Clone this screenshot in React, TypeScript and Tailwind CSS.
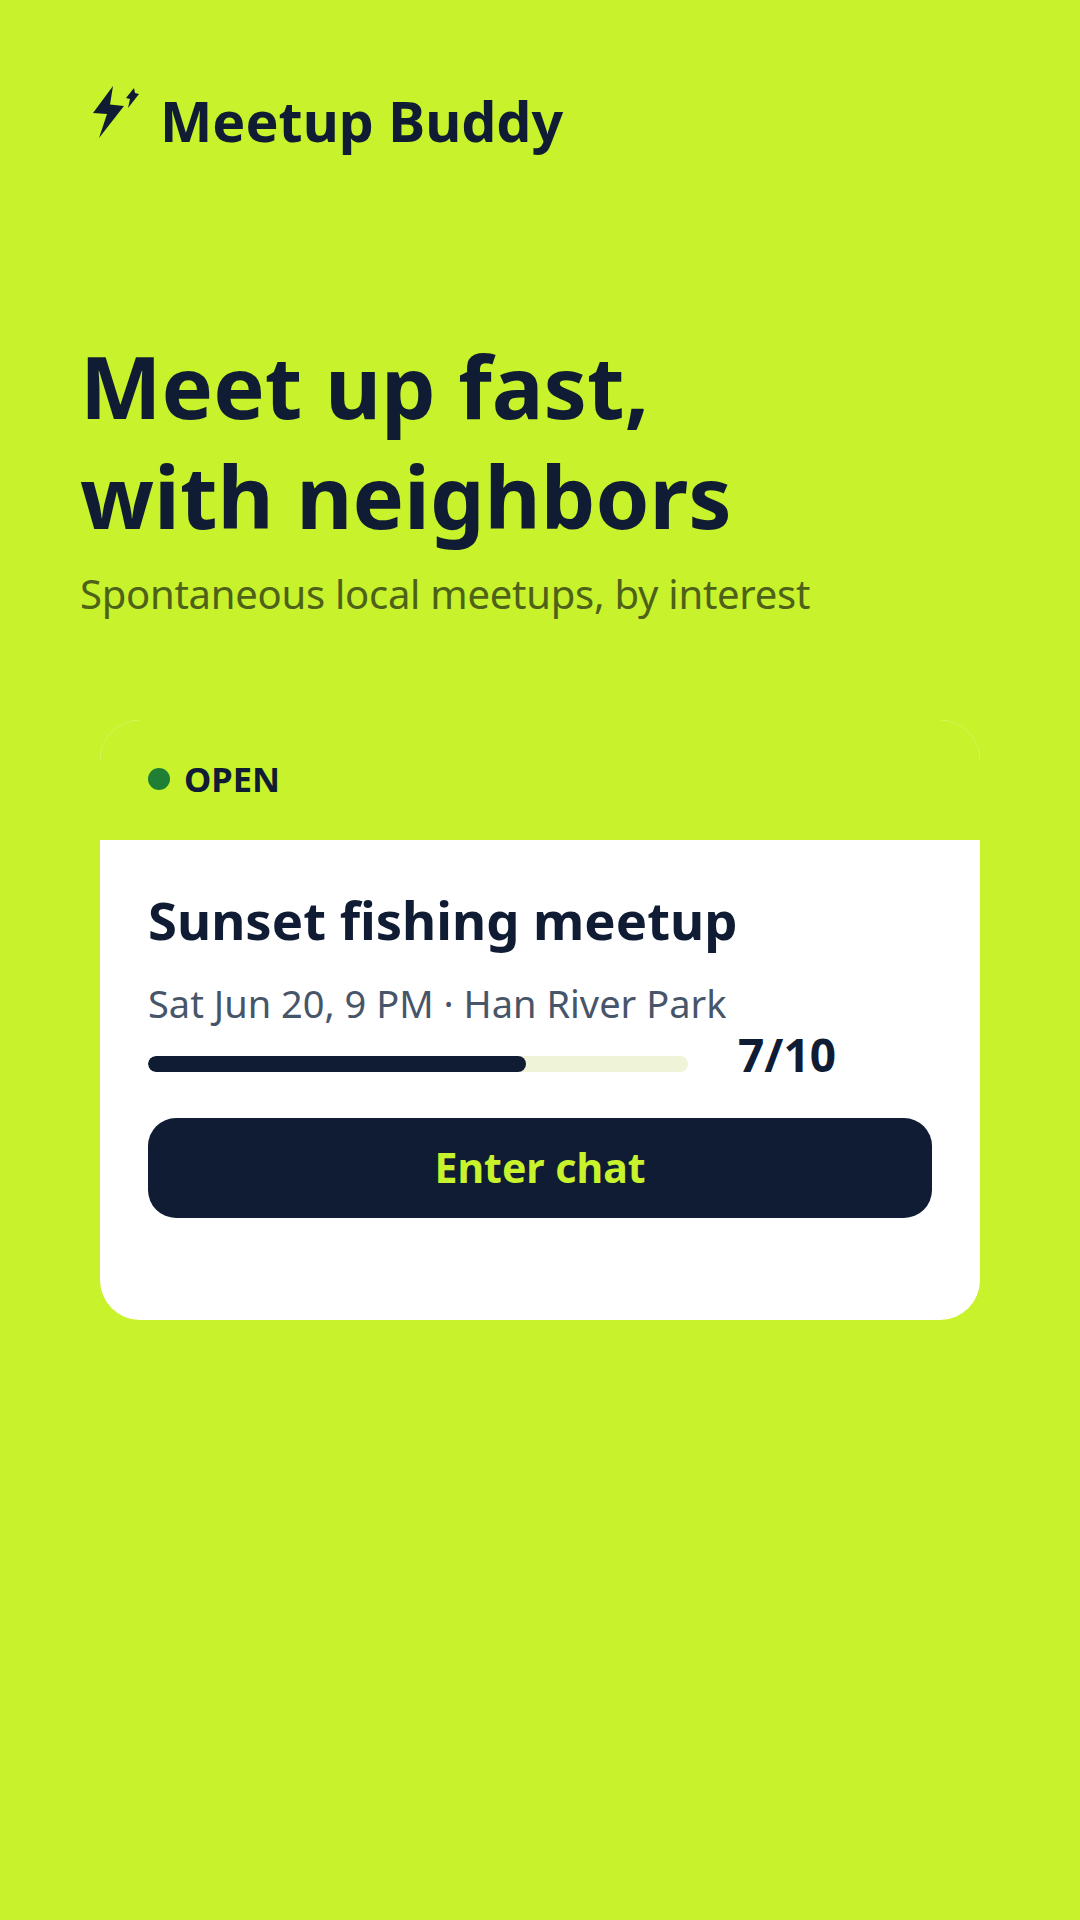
export default function App() {
  return (
    <div className="w-[1080px] h-[1920px] bg-[#c7f22c] font-['Noto_Sans',sans-serif] text-[#0f1c33] flex flex-col overflow-hidden">
      <header className="pt-[80px] pl-[80px] h-[331px] flex items-start">
        <div className="flex items-center gap-[18px] h-[82px]">
          <svg className="w-[62px] h-[70px] shrink-0 -mt-[10px]" viewBox="80 80 62 70" aria-hidden="true">
            <path d="M113 85 L93 112 L107 113 L99 137 L124 105 L110 103.5 Z" fill="#0f1c33" />
            <path d="M134 87 L126 97 L130 98 L128 107 L139 93 L135 92 Z" fill="#0f1c33" />
          </svg>
          <span className="text-[55.5px] font-bold leading-none">Meetup Buddy</span>
        </div>
      </header>
      <section className="pl-[80px]">
        <h1 className="text-[86.5px] font-bold leading-[110px]">Meet up fast,<br />with neighbors</h1>
        <p className="text-[40px] leading-[52px] text-[#4d6119] mt-[17px] tracking-[-0.26px]">Spontaneous local meetups, by interest</p>
      </section>
      <section className="mt-[100px] mx-[100px] w-[880px] h-[600px] bg-white rounded-[40px] overflow-hidden flex flex-col">
        <div className="h-[120px] bg-[#c7f22c] px-[48px] pb-[2px] flex items-center gap-[14px] shrink-0">
          <span className="w-[22px] h-[22px] rounded-full bg-[#1f8035]" />
          <span className="text-[34.5px] font-bold leading-none">OPEN</span>
        </div>
        <div className="px-[48px] pt-[44px] flex flex-col">
          <h2 className="text-[52.6px] font-bold leading-[72px]">Sunset fishing meetup</h2>
          <p className="text-[38px] leading-[50px] text-[#475569] mt-[22px]">Sat Jun 20, 9 PM · Han River Park</p>
          <div className="flex items-center h-[56px] mt-[8px]">
            <div className="w-[540px] h-[16px] rounded-full bg-[#eff4d9] overflow-hidden">
              <div className="w-[70%] h-full rounded-full bg-[#0f1c33]" />
            </div>
            <span className="ml-[50px] mb-[20px] text-[46px] font-bold leading-[56px]">7/10</span>
          </div>
          <button className="mt-[26px] h-[100px] w-[784px] rounded-[28px] bg-[#0f1c33] text-[#c7f22c] text-[41px] font-bold">Enter chat</button>
        </div>
      </section>
    </div>
  );
}
